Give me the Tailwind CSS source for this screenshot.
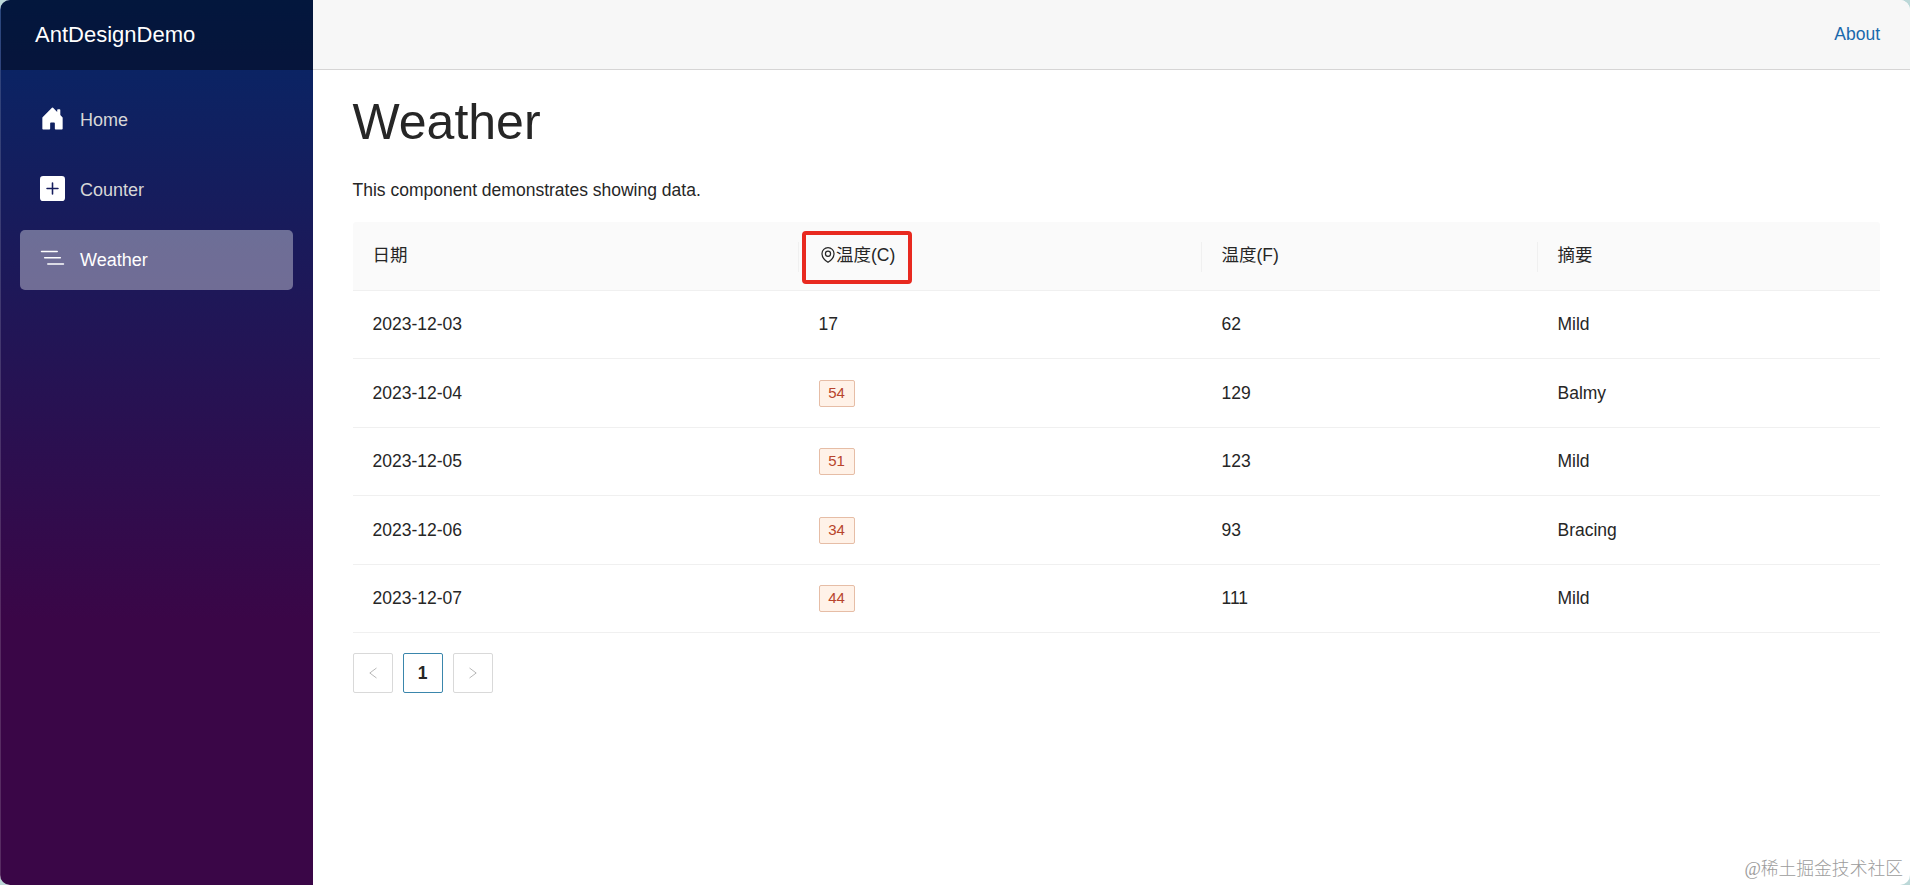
<!DOCTYPE html>
<html lang="zh">

<head>
    <meta charset="UTF-8">
    <meta name="viewport" content="width=device-width, initial-scale=1.0">
    <title>Weather</title>
    <script src="https://cdn.jsdelivr.net/npm/@tailwindcss/browser@4"></script>
    <style>
        body {
            font-family: 'Liberation Sans', 'Noto Sans CJK SC', sans-serif;
        }
    </style>
</head>

<body class="bg-[#bcd8d8] text-[17.5px] text-[#262626]">
    <div class="relative flex h-screen overflow-hidden rounded-[10px] bg-white">

        <!-- Sidebar -->
        <aside class="w-[313px] shrink-0 border-l border-white/15 bg-linear-to-b/srgb from-[#052767] to-[#3a0647] to-70%">
            <div class="flex h-[70px] items-center bg-black/40 pl-[34px] text-[22px] text-white">
                <a href="#" class="-mt-0.5">AntDesignDemo</a>
            </div>
            <nav class="flex flex-col gap-2.5 pt-5 pr-5 pl-[19px] text-lg text-[#d7d7d7]">
                <a href="#" class="flex h-[60px] items-center rounded-[5px] pl-5">
                    <svg class="-mt-[3px] mr-[15px] size-[25px] text-white" fill="currentColor" viewBox="0 0 16 16">
                        <path
                            d="M6.5 14.5v-3.505c0-.245.25-.495.5-.495h2c.25 0 .5.25.5.5v3.5a.5.5 0 0 0 .5.5h4a.5.5 0 0 0 .5-.5v-7a.5.5 0 0 0-.146-.354L13 5.793V2.5a.5.5 0 0 0-.5-.5h-1a.5.5 0 0 0-.5.5v1.293L8.354 1.146a.5.5 0 0 0-.708 0l-6 6A.5.5 0 0 0 1.5 7.5v7a.5.5 0 0 0 .5.5h4a.5.5 0 0 0 .5-.5Z" />
                    </svg>
                    Home
                </a>
                <a href="#" class="flex h-[60px] items-center rounded-[5px] pl-5">
                    <svg class="-mt-[3px] mr-[15px] size-[25px] text-white" fill="currentColor" viewBox="0 0 16 16">
                        <path
                            d="M2 0a2 2 0 0 0-2 2v12a2 2 0 0 0 2 2h12a2 2 0 0 0 2-2V2a2 2 0 0 0-2-2H2zm6.5 4.5v3h3a.5.5 0 0 1 0 1h-3v3a.5.5 0 0 1-1 0v-3h-3a.5.5 0 0 1 0-1h3v-3a.5.5 0 0 1 1 0z" />
                    </svg>
                    Counter
                </a>
                <a href="#" class="flex h-[60px] items-center rounded-[5px] bg-white/37 pl-5 text-white">
                    <svg class="-mt-[3px] mr-[15px] size-[25px]" fill="currentColor" viewBox="0 0 16 16">
                        <path
                            d="M4.5 11.5A.5.5 0 0 1 5 11h10a.5.5 0 0 1 0 1H5a.5.5 0 0 1-.5-.5zm-2-4A.5.5 0 0 1 3 7h10a.5.5 0 0 1 0 1H3a.5.5 0 0 1-.5-.5zm-2-4A.5.5 0 0 1 1 3h10a.5.5 0 0 1 0 1H1a.5.5 0 0 1-.5-.5z" />
                    </svg>
                    Weather
                </a>
            </nav>
        </aside>

        <main class="flex-1">
            <div class="flex h-[70px] items-center justify-end border-b border-[#d6d5d5] bg-[#f7f7f7] pr-[30px]">
                <a href="#" class="-mt-px text-[#1a69ac]">About</a>
            </div>

            <article class="pr-[30px] pl-[39.5px]">
                <h1 class="pt-[22px] text-[50px] leading-[60px]">Weather</h1>
                <p class="mt-6 leading-[28px]">This component demonstrates showing data.</p>

                <table class="mt-[18px] w-full table-fixed border-separate border-spacing-0 text-left">
                    <colgroup>
                        <col class="w-[446px]">
                        <col class="w-[403px]">
                        <col class="w-[336px]">
                        <col>
                    </colgroup>
                    <thead>
                        <tr class="h-[69px] *:border-b *:border-[#f0f0f0] *:bg-[#fafafa] *:px-0 *:pt-0.5 *:pb-0 *:font-normal">
                            <th class="rounded-tl-[3px]">
                                <div class="flex h-[30px] items-center border-r border-[#f0f0f0] pl-5">
                                    <span class="-mt-1">日期</span>
                                </div>
                            </th>
                            <th>
                                <div class="relative flex h-[30px] items-center border-r border-[#f0f0f0] pl-5">
                                    <svg class="-mt-1 mr-[0.5px] ml-px size-4" fill="none" stroke="currentColor" stroke-width="68" viewBox="64 64 896 896">
                                        <path
                                            d="M512 922C440 880 176 700 176 431C176 249 326 103 512 103S848 249 848 431C848 700 584 880 512 922Z" />
                                        <circle cx="512" cy="439" r="144" />
                                    </svg>
                                    <span class="-mt-1">温度(C)</span>
                                    <!-- highlight around the custom column title -->
                                    <div class="absolute -top-[11px] left-[3px] h-[53px] w-[110px] rounded-[4px] border-4 border-[#e8291f]"></div>
                                </div>
                            </th>
                            <th>
                                <div class="flex h-[30px] items-center border-r border-[#f0f0f0] pl-5">
                                    <span class="-mt-1">温度(F)</span>
                                </div>
                            </th>
                            <th class="rounded-tr-[3px]">
                                <div class="flex h-[30px] items-center pl-5">
                                    <span class="-mt-1">摘要</span>
                                </div>
                            </th>
                        </tr>
                    </thead>
                    <tbody>
                        <tr class="h-[68px] *:border-b *:border-[#f0f0f0] *:py-0 *:pl-5">
                            <td>2023-12-03</td>
                            <td>17</td>
                            <td>62</td>
                            <td>Mild</td>
                        </tr>
                        <tr class="h-[69px] *:border-b *:border-[#f0f0f0] *:py-0 *:pl-5">
                            <td>2023-12-04</td>
                            <td>
                                <div class="flex h-[27px] w-9 items-center justify-center rounded-[2px] border border-[#e6bda6] bg-[#fff2e8] text-[15px] text-[#b8442c]">54</div>
                            </td>
                            <td>129</td>
                            <td>Balmy</td>
                        </tr>
                        <tr class="h-[68px] *:border-b *:border-[#f0f0f0] *:py-0 *:pl-5">
                            <td>2023-12-05</td>
                            <td>
                                <div class="flex h-[27px] w-9 items-center justify-center rounded-[2px] border border-[#e6bda6] bg-[#fff2e8] text-[15px] text-[#b8442c]">51</div>
                            </td>
                            <td>123</td>
                            <td>Mild</td>
                        </tr>
                        <tr class="h-[69px] *:border-b *:border-[#f0f0f0] *:py-0 *:pl-5">
                            <td>2023-12-06</td>
                            <td>
                                <div class="flex h-[27px] w-9 items-center justify-center rounded-[2px] border border-[#e6bda6] bg-[#fff2e8] text-[15px] text-[#b8442c]">34</div>
                            </td>
                            <td>93</td>
                            <td>Bracing</td>
                        </tr>
                        <tr class="h-[68px] *:border-b *:border-[#f0f0f0] *:py-0 *:pl-5">
                            <td>2023-12-07</td>
                            <td>
                                <div class="flex h-[27px] w-9 items-center justify-center rounded-[2px] border border-[#e6bda6] bg-[#fff2e8] text-[15px] text-[#b8442c]">44</div>
                            </td>
                            <td>111</td>
                            <td>Mild</td>
                        </tr>
                    </tbody>
                </table>

                <!-- Pagination -->
                <div class="mt-5 flex gap-2.5">
                    <button class="flex size-10 items-center justify-center rounded-[2px] border border-[#d9d9d9] text-[#b8b8b8]">
                        <svg class="h-3 w-2" fill="none" stroke="currentColor" viewBox="0 0 8 12">
                            <path d="M7.5 1L.8 6l6.7 5" />
                        </svg>
                    </button>
                    <button class="flex size-10 items-center justify-center rounded-[2px] border border-[#3a86ac] font-bold">1</button>
                    <button class="flex size-10 items-center justify-center rounded-[2px] border border-[#d9d9d9] text-[#b8b8b8]">
                        <svg class="h-3 w-2" fill="none" stroke="currentColor" viewBox="0 0 8 12">
                            <path d="M.5 1l6.7 5-6.7 5" />
                        </svg>
                    </button>
                </div>
            </article>
        </main>

        <div class="absolute right-[7px] bottom-[3px] font-['Liberation_Serif','Noto_Sans_CJK_SC',serif] text-[17.8px] leading-[26px] font-light text-[#9c9c9c]">@稀土掘金技术社区</div>
    </div>
</body>

</html>
